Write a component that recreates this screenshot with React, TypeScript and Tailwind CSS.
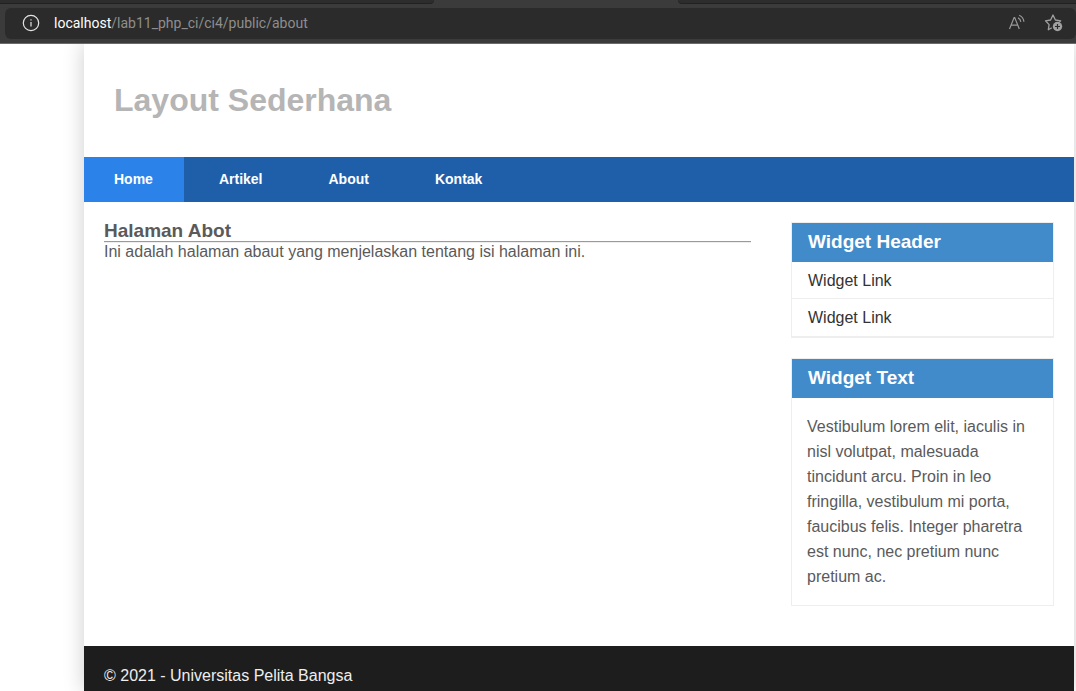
import type { ReactNode } from "react";

const navItems = ["Home", "Artikel", "About", "Kontak"];

function InfoIcon() {
  return (
    <svg width="18" height="18" viewBox="0 0 18 18" fill="none" stroke="#e4e4e4" strokeWidth="1.2" aria-hidden="true">
      <circle cx="9" cy="9" r="7.7" />
      <path d="M9 8v4.6" />
      <path d="M9 5.2v1.3" />
    </svg>
  );
}

function ReadAloudIcon() {
  return (
    <svg width="18" height="18" viewBox="0 0 18 18" fill="none" stroke="#9a9a9a" strokeWidth="1.2" aria-hidden="true">
      <path d="M1.5 15 6.1 3.500h.6l4.600 11.500M3.200 11.100h6.400" />
      <path d="M10 3.900c1.600.6 2.600 1.900 2.800 4M11.200 1.200c2.900 1.200 4.400 3.400 4.700 6.600" />
    </svg>
  );
}

function AddFavoriteIcon() {
  return (
    <svg width="20" height="20" viewBox="0 0 20 20" fill="none" aria-hidden="true">
      <path
        d="M7.800 14.800 4.300 16.800l.8-5.200L1.500 7.800l5.100-.8L9 2l2.400 5 5.300.8-1.400 1.300"
        stroke="#a0a0a0"
        strokeWidth="1.300"
        strokeLinejoin="round"
      />
      <circle cx="13.500" cy="13.500" r="4.700" fill="#a0a0a0" />
      <path d="M13.500 11v5M11 13.500h5" stroke="#2b2b2b" strokeWidth="1.200" />
    </svg>
  );
}

function BrowserBar() {
  return (
    <div className="border-b border-[#6b6b6b] bg-[#3b3b3b]">
      <div className="flex h-1 justify-between">
        <div className="w-[434px] rounded-br-sm border-b border-[#222222] bg-[#2d2d2d]" />
        <div className="w-[398px] rounded-bl-sm border-b border-[#222222] bg-[#2d2d2d]" />
      </div>
      <div className="pt-1 pb-1 pl-[5px]">
        <div className="flex h-[31px] items-center rounded-md bg-[#2b2b2b] pr-3 pb-px pl-[17px]">
          <button type="button" aria-label="Site information">
            <InfoIcon />
          </button>
          <div className="ml-[14px] flex-1 font-['Roboto',sans-serif] text-sm leading-5 text-[#8e8e8e]">
            <span className="text-white">localhost</span>/lab11_php_ci/ci4/public/about
          </div>
          <button type="button" aria-label="Read aloud" className="mr-[18px]">
            <ReadAloudIcon />
          </button>
          <button type="button" aria-label="Add to favorites">
            <AddFavoriteIcon />
          </button>
        </div>
      </div>
    </div>
  );
}

function Widget({ title, children }: { title: string; children: ReactNode }) {
  return (
    <section className="border border-[#eeeeee]">
      <h3 className="bg-[#428bca] px-4 pt-2 pb-[9px] text-[19px] leading-[22px] font-bold text-white">{title}</h3>
      {children}
    </section>
  );
}

export default function App() {
  return (
    <div className="flex min-h-screen flex-col overflow-hidden bg-white font-['Liberation_Sans',Arial,sans-serif] text-base text-[#5a5a5a]">
      <div className="relative z-10">
        <BrowserBar />
      </div>
      <div className="mr-[2px] ml-[84px] flex flex-1 flex-col bg-white shadow-[0_0_20px_rgba(0,0,0,0.2)]">
        <header className="px-[30px] pt-9 pb-[37px]">
          <h1 className="text-[32px] leading-10 font-bold text-[#b5b5b5]">Layout Sederhana</h1>
        </header>
        <nav className="flex gap-[5px] bg-[#1f5faa]">
          {navItems.map((item, index) => (
            <a
              key={item}
              href="#"
              className={
                index === 0
                  ? "bg-[#2b83ea] py-3 pr-[31px] pl-[30px] text-sm leading-[21px] font-bold text-white"
                  : "py-3 pr-[31px] pl-[30px] text-sm leading-[21px] font-bold text-white"
              }
            >
              {item}
            </a>
          ))}
        </nav>
        <div className="flex gap-10 px-5 pt-5 pb-10">
          <main className="flex-1">
            <h2 className="pb-[2px] text-[19px] leading-[17px] font-bold">Halaman Abot</h2>
            <hr className="h-[2px] border-t border-b border-t-[#9a9a9a] border-b-[#eeeeee]" />
            <p className="leading-[18px]">Ini adalah halaman abaut yang menjelaskan tentang isi halaman ini.</p>
          </main>
          <aside className="flex w-[263px] flex-col gap-5">
            <Widget title="Widget Header">
              <ul className="text-[#333333]">
                <li className="border-b border-[#eeeeee]">
                  <a href="#" className="block px-4 pt-[10px] pb-2 leading-[18px]">Widget Link</a>
                </li>
                <li className="border-b border-[#eeeeee]">
                  <a href="#" className="block px-4 pt-[10px] pb-[9px] leading-[18px]">Widget Link</a>
                </li>
              </ul>
            </Widget>
            <Widget title="Widget Text">
              <p className="px-[15px] py-4 leading-[25px]">
                Vestibulum lorem elit, iaculis in nisl volutpat, malesuada tincidunt arcu. Proin in leo fringilla,
                vestibulum mi porta, faucibus felis. Integer pharetra est nunc, nec pretium nunc pretium ac.
              </p>
            </Widget>
          </aside>
        </div>
        <footer className="flex-1 bg-[#1d1d1d] px-5 pt-[21px] text-[#eeeeee]">
          <p className="leading-[18px]">© 2021 - Universitas Pelita Bangsa</p>
        </footer>
      </div>
    </div>
  );
}
